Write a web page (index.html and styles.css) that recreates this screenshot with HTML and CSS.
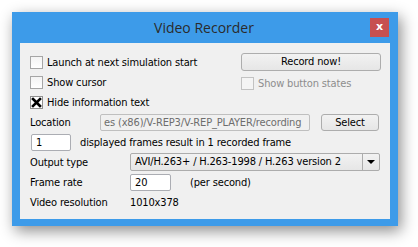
FILE: index.html
```html
<!DOCTYPE html>
<html lang="en">
<head>
  <meta charset="UTF-8" />
  <title>Video Recorder</title>
  <link rel="stylesheet" href="styles.css">
</head>
<body>
  <div class="window">
    <div class="titlebar">
      <span class="title">Video Recorder</span>
      <span class="close">x</span>
    </div>

    <div class="panel">
      <div class="top">
        <div class="left">
          <label class="check"><span class="box"></span>Launch at next simulation start</label>
          <label class="check"><span class="box"></span>Show cursor</label>
          <label class="check"><span class="box checked">
            <svg width="11" height="11" viewBox="0 0 11 11"><path d="M2 2 L9 9 M9 2 L2 9" stroke="#000" stroke-width="2.6" stroke-linecap="square"/></svg>
          </span>Hide information text</label>
        </div>
        <div class="right">
          <div class="btn record">Record now!</div>
          <label class="check disabled"><span class="box"></span>Show button states</label>
        </div>
      </div>

      <div class="row">
        <span class="label short">Location</span>
        <div class="field location">es (x86)/V-REP3/V-REP_PLAYER/recording</div>
        <div class="btn select">Select</div>
      </div>

      <div class="row">
        <div class="field small first">1</div>
        <span class="note">displayed frames result in 1 recorded frame</span>
      </div>

      <div class="row">
        <span class="label">Output type</span>
        <div class="combo">
          <span class="combo-text">AVI/H.263+ / H.263-1998 / H.263 version 2</span>
          <span class="arrow"></span>
        </div>
      </div>

      <div class="row">
        <span class="label">Frame rate</span>
        <div class="field small">20</div>
        <span class="unit">(per second)</span>
      </div>

      <div class="row">
        <span class="label">Video resolution</span>
        <span>1010x378</span>
      </div>
    </div>
  </div>
</body>
</html>
```

FILE: styles.css
```css
body {
  margin: 0;
  width: 418px;
  height: 247px;
  background: #ffffff;
  font-family: "DejaVu Sans Condensed", "DejaVu Sans", sans-serif;
  font-size: 11px;
  letter-spacing: -0.15px;
  color: #000;
  overflow: hidden;
}

.window {
  margin: 12px 0 0 12px;
  width: 386px;
  height: 214px;
  box-sizing: border-box;
  background: #3d9be9;
  padding: 0 8px 7px 8px;
  box-shadow: 3px 5px 14px rgba(0, 0, 0, 0.45);
}

.titlebar {
  height: 31px;
  position: relative;
  display: flex;
  justify-content: center;
  align-items: center;
}

.title {
  font-family: "Open Sans", "Noto Sans", sans-serif;
  font-size: 14px;
  letter-spacing: 0;
  color: #2b2b2b;
  margin-left: -2px;
}

/* close button sits in the title bar corner */
.close {
  position: absolute;
  right: 1px;
  top: 6px;
  width: 19px;
  height: 19px;
  background: #c75050;
  color: #fff;
  font-family: "DejaVu Sans", sans-serif;
  font-weight: bold;
  font-size: 11px;
  line-height: 17px;
  text-align: center;
}

.panel {
  background: #f0f0f0;
  height: 176px;
  box-sizing: border-box;
  padding: 9px 9px 7px 10px;
}

.top {
  display: grid;
  grid-template-columns: 211px 140px;
}

.left {
  display: flex;
  flex-direction: column;
}

.check {
  display: flex;
  align-items: center;
  height: 20px;
  white-space: nowrap;
}

.box {
  width: 11px;
  height: 11px;
  border: 1px solid #a6a6a6;
  background: linear-gradient(#f4f4f4, #ffffff);
  margin-right: 4px;
  display: flex;
  align-items: center;
  justify-content: center;
  flex-shrink: 0;
}

.box.checked {
  background: #fff;
  border-color: #8f8f8f;
}

.disabled {
  color: #8d8d8d;
}

.disabled .box {
  border-color: #c2c2c2;
  background: #f4f4f4;
}

.right {
  display: flex;
  flex-direction: column;
}

.btn {
  box-sizing: border-box;
  border: 1px solid #adadad;
  border-radius: 3px;
  background: linear-gradient(#f2f2f2, #e6e6e6);
  text-align: center;
}

.record {
  margin-top: 1px;
  height: 18px;
  line-height: 16px;
}

.right .check {
  margin-top: 2px;
}

.row {
  display: flex;
  align-items: center;
  height: 20px;
  white-space: nowrap;
}

.label {
  width: 100px;
  flex-shrink: 0;
}

.label.short {
  width: 70px;
}

.field {
  box-sizing: border-box;
  height: 17px;
  line-height: 15px;
  border: 1px solid #abadb3;
  border-radius: 2px;
  background: #fff;
  padding: 0 4px;
  overflow: hidden;
}

.location {
  width: 210px;
  background: #f0f0f0;
  color: #6d6d6d;
  border-color: #bfbfbf;
  padding-left: 3px;
}

.select {
  margin-left: 11px;
  width: 58px;
  height: 17px;
  line-height: 15px;
}

.small {
  width: 41px;
}

.small.first {
  margin-left: 1px;
  width: 40px;
}

.note {
  margin-left: 9px;
}

.unit {
  margin-left: 19px;
}

.combo {
  box-sizing: border-box;
  width: 250px;
  height: 18px;
  border: 1px solid #acacac;
  border-radius: 2px;
  background: linear-gradient(#f2f2f2, #e6e6e6);
  display: flex;
  align-items: center;
}

.combo-text {
  flex: 1;
  padding-left: 4px;
  line-height: 16px;
}

.arrow {
  width: 16px;
  height: 16px;
  border-left: 1px solid #acacac;
  display: flex;
  align-items: center;
  justify-content: center;
}

.arrow::after {
  content: "";
  border-left: 4px solid transparent;
  border-right: 4px solid transparent;
  border-top: 4px solid #000;
}
```
